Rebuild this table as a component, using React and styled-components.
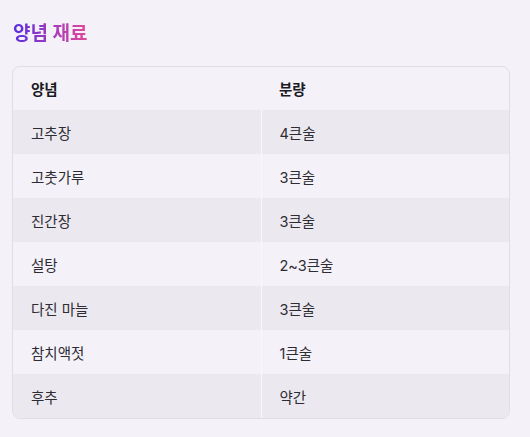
import React from "react";
import styled, { createGlobalStyle } from "styled-components";

const GlobalStyle = createGlobalStyle`
  html, body {
    margin: 0;
    background: #f4f2f8;
  }
  body {
    font-family: Inter, "Noto Sans CJK KR", sans-serif;
    color: #1f1d24;
  }
`;

const rows = [
  ["고추장", "4큰술"],
  ["고춧가루", "3큰술"],
  ["진간장", "3큰술"],
  ["설탕", "2~3큰술"],
  ["다진 마늘", "3큰술"],
  ["참치액젓", "1큰술"],
  ["후추", "약간"],
];

const App = () => {
  return (
    <>
      <GlobalStyle />
      <Page>
        <Title>양념 재료</Title>
        <TableWrap>
          <Table>
            <thead>
              <tr>
                <HeadCell>양념</HeadCell>
                <HeadCell>분량</HeadCell>
              </tr>
            </thead>
            <tbody>
              {rows.map(([name, amount], i) => (
                <Row key={name} $odd={i % 2 === 0}>
                  <Cell $first>{name}</Cell>
                  <Cell>{amount}</Cell>
                </Row>
              ))}
            </tbody>
          </Table>
        </TableWrap>
      </Page>
    </>
  );
};

const Page = styled.div`
  padding: 22px 20px 20px 12px;
`;

const Title = styled.h2`
  margin: 0 0 20px 1px;
  font-size: 19px;
  font-weight: 700;
  line-height: 24px;
  display: inline-block;
  background: linear-gradient(90deg, #5a2ee0 0%, #e2489a 100%);
  -webkit-background-clip: text;
  background-clip: text;
  color: transparent;
`;

const TableWrap = styled.div`
  border: 1px solid #e0dde5;
  border-radius: 8px;
  overflow: hidden;
`;

const Table = styled.table`
  width: 100%;
  border-collapse: collapse;
  table-layout: fixed;
  font-size: 14.5px;
`;

const HeadCell = styled.th`
  height: 43px;
  padding: 0 18px;
  text-align: left;
  font-weight: 700;
  color: #1b1a1f;
`;

const Row = styled.tr`
  background: ${(p) => (p.$odd ? "#ebe9ef" : "#f4f2f8")};
`;

const Cell = styled.td`
  height: 44px;
  padding: 0 18px;
  color: #2e2c33;
  border-right: ${(p) => (p.$first ? "1px solid #f8f7fa" : "none")};
`;

export default App;
